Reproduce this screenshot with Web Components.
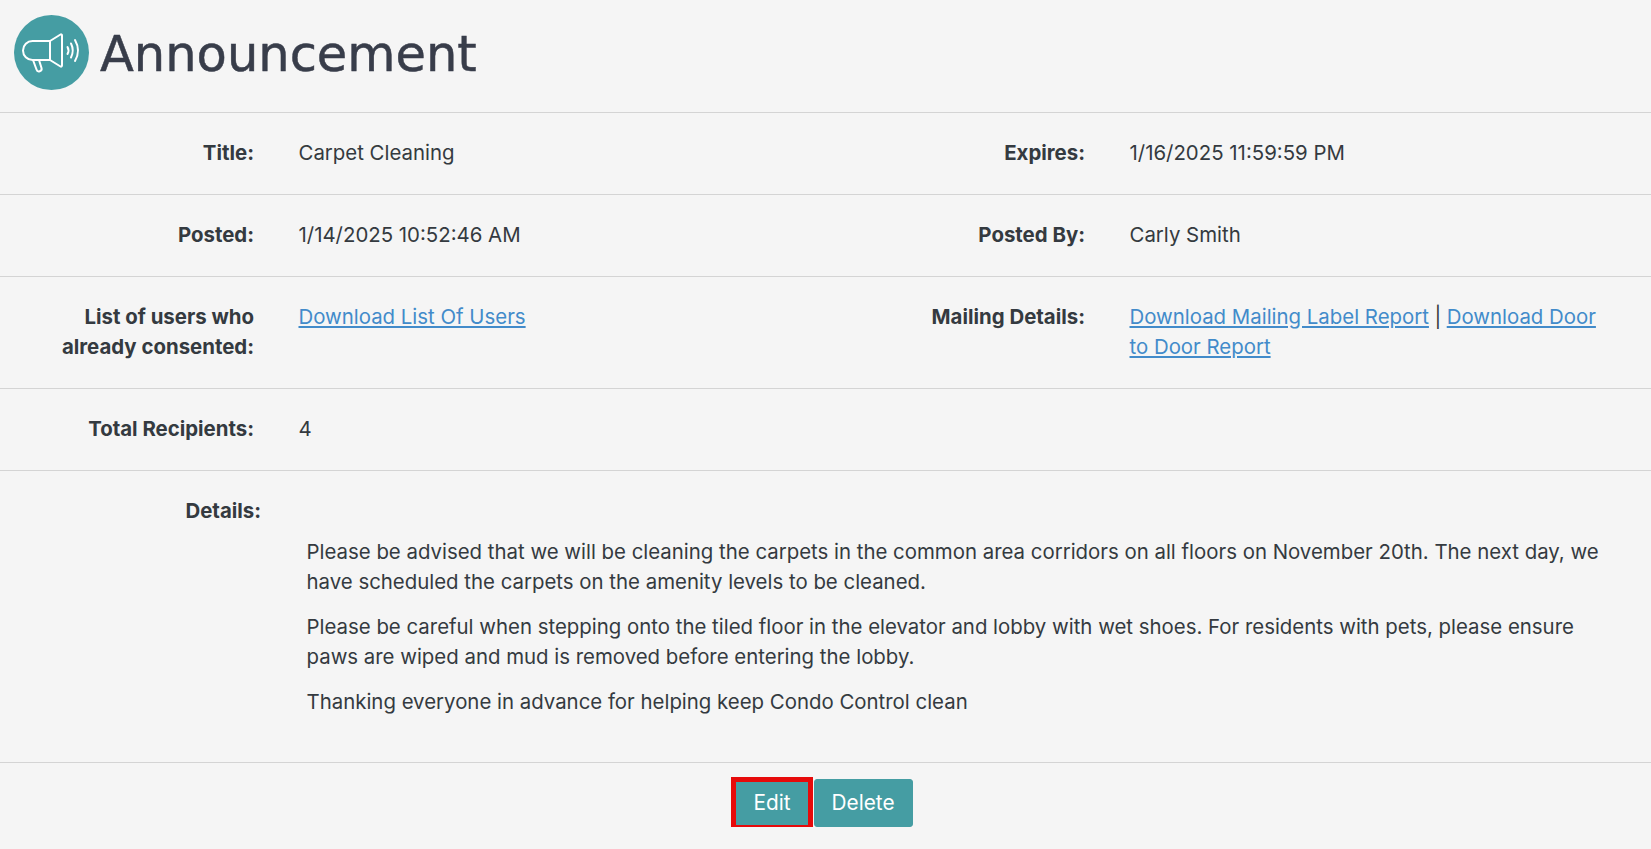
<!DOCTYPE html>
<html><head><meta charset="utf-8"><style>
html,body{margin:0;padding:0;background:#f5f5f5;}
body{font-family:"Inter","Liberation Sans",sans-serif;font-size:20.4px;line-height:30px;color:#343a40;}
a{color:#428bca}
.sep{margin:0 .27em}
</style></head><body>
<template id="h"><style>
:host{display:flex;align-items:center;height:113px;box-sizing:border-box;padding:0 0 8px 14px;gap:11px;border-bottom:1px solid #d4d4d4}
h1{margin:3px 0 0;font:400 49.500px/60px "DejaVu Sans",sans-serif;color:#383d4a;-webkit-text-stroke:.5px #383d4a}
svg{display:block;flex:none}
</style><svg width="75" height="75" viewBox="0 0 75 75"><circle cx="37.500" cy="37.500" r="37.500" fill="#459da3"/><g fill="none" stroke="#fff" stroke-width="2" stroke-linejoin="round" stroke-linecap="round"><path d="M36 26H18.500a9.500 9.500 0 0 0 0 19H36z"/><path d="M36 26 46.500 19.500a1 1 0 0 1 1.500 1V50.500a1 1 0 0 1-1.500 1L36 45"/><path d="M19 45 22.500 54.500a2.600 2.600 0 0 0 5-1.500L25 45"/><path d="M53.500 32q2 3.500 0 7M57 28.500q3.500 7 0 14M61 25q6 10.500 0 21"/></g></svg><h1><slot></slot></h1></template>
<template id="r"><style>
:host{display:grid;grid-template-columns:254px 488px 254px 1fr;column-gap:44.500px;box-sizing:border-box;padding:25px 0 26px;border-bottom:1px solid #d4d4d4}
.l{text-align:right;font-weight:700;padding-left:40px}
</style><div class="l"><slot name="a"></slot></div><div><slot name="b"></slot></div><div class="l"><slot name="c"></slot></div><div style="padding-right:41px"><slot name="d"></slot></div></template>
<template id="d"><style>
:host{display:block;box-sizing:border-box;height:292px;padding:25px 41px 0 0;border-bottom:1px solid #d4d4d4}
.l{width:261px;text-align:right;font-weight:700}
.b{margin:11px 0 0 306.500px}
::slotted(p){margin:0 0 15px}
</style><div class="l"><slot name="l"></slot></div><div class="b"><slot></slot></div></template>
<template id="f"><style>
:host{display:flex;justify-content:center;gap:3px;padding:16px 5px 0 0}
</style><slot></slot></template>
<template id="b"><style>
:host{display:inline-block;position:relative;box-sizing:border-box;height:48px;padding:0 17px;line-height:46px;background:#459da3;color:#fff;border:1px solid #459da3;border-radius:3px;font-size:20.800px}
:host([focus]){padding:0 19px}
:host([focus])::after{content:"";position:absolute;top:-3px;left:-3px;right:-3px;bottom:-4px;border:5px solid #e60a0a}
</style><slot></slot></template>
<page-head>Announcement</page-head>
<info-row><span slot="a">Title:</span><span slot="b">Carpet Cleaning</span><span slot="c">Expires:</span><span slot="d">1/16/2025 11:59:59 PM</span></info-row>
<info-row><span slot="a">Posted:</span><span slot="b">1/14/2025 10:52:46 AM</span><span slot="c">Posted By:</span><span slot="d">Carly Smith</span></info-row>
<info-row><span slot="a">List of users who already consented:</span><a slot="b" href="#">Download List Of Users</a><span slot="c">Mailing Details:</span><a slot="d" href="#">Download Mailing Label Report</a><span slot="d" class="sep">|</span><a slot="d" href="#">Download Door to Door Report</a></info-row>
<info-row><span slot="a">Total Recipients:</span><span slot="b">4</span></info-row>
<detail-block><span slot="l">Details:</span>
<p>Please be advised that we will be cleaning the carpets in the common area corridors on all floors on November 20th. The next day, we have scheduled the carpets on the amenity levels to be cleaned.</p>
<p>Please be careful when stepping onto the tiled floor in the elevator and lobby with wet shoes. For residents with pets, please ensure paws are wiped and mud is removed before entering the lobby.</p>
<p>Thanking everyone in advance for helping keep Condo Control clean</p></detail-block>
<action-bar><act-btn focus>Edit</act-btn><act-btn>Delete</act-btn></action-bar>
<script>
for(const [t,i] of [['page-head','h'],['info-row','r'],['detail-block','d'],['action-bar','f'],['act-btn','b']]){
customElements.define(t,class extends HTMLElement{constructor(){super();this.attachShadow({mode:'open'}).append(document.getElementById(i).content.cloneNode(true));}});}
</script></body></html>
